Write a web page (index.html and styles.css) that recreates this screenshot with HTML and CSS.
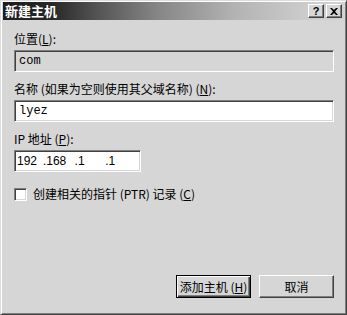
FILE: index.html
```html
<!DOCTYPE html>
<html lang="zh-CN">
<head>
  <meta charset="UTF-8" />
  <title>新建主机</title>
  <link rel="stylesheet" href="styles.css">
</head>
<body>
  <div class="window">
    <div class="titlebar">
      <span class="title">新建主机</span>
      <div class="title-buttons">
        <span class="tbtn">?</span>
        <span class="tbtn close">
          <svg width="8" height="7" viewBox="0 0 8 7"><path d="M0 0h2l2 2 2-2h2L5 3.5 8 7H6L4 5 2 7H0l3-3.5z" fill="#000"/></svg>
        </span>
      </div>
    </div>

    <div class="content">
      <div class="field-group">
        <label class="label">位置(<u>L</u>):</label>
        <div class="field readonly">com</div>
      </div>

      <div class="field-group">
        <label class="label">名称 (如果为空则使用其父域名称) (<u>N</u>):</label>
        <div class="field">lyez</div>
      </div>

      <div class="field-group">
        <label class="label">IP 地址 (<u>P</u>):</label>
        <div class="field ip">
          <span class="octet first">192</span><span class="octet second">.168</span><span class="octet">.1</span><span class="octet">.1</span>
        </div>
      </div>

      <div class="check-row">
        <span class="checkbox"></span>
        <span class="label">创建相关的指针 (PTR) 记录 (<u>C</u>)</span>
      </div>

      <div class="buttons">
        <button class="btn default">添加主机 (<u>H</u>)</button>
        <button class="btn">取消</button>
      </div>
    </div>
  </div>
</body>
</html>
```

FILE: styles.css
```css
body {
  margin: 0;
  padding: 0;
  background-color: #d6d6d6;
  font-family: "Noto Sans CJK SC", "DejaVu Sans", sans-serif;
  font-size: 12px;
  color: #000;
}
.window {
  width: 347px;
  height: 315px;
  box-sizing: border-box;
  background-color: #d6d6d6;
  border: 1px solid;
  border-color: #dcdcdc #404040 #404040 #dcdcdc;
  box-shadow: inset 1px 1px 0 #fff, inset -1px -1px 0 #808080;
  padding: 1px 2px 2px 2px;
  display: flex;
  flex-direction: column;
}
.titlebar {
  height: 18px;
  display: flex;
  align-items: center;
  justify-content: space-between;
  background: linear-gradient(to right, #1e1e1e 0%, #262626 14%, #555555 28%, #858585 45%, #b3b3b3 68%, #cbcbcb 88%, #d2d2d2 100%);
  padding: 0 2px 0 2px;
}
.title {
  color: #fff;
  font-weight: bold;
  font-size: 13px;
  line-height: 18px;
}
.title-buttons {
  display: flex;
  gap: 2px;
}
.tbtn {
  width: 16px;
  height: 14px;
  box-sizing: border-box;
  background-color: #d6d6d6;
  border: 1px solid;
  border-color: #fff #404040 #404040 #fff;
  box-shadow: inset -1px -1px 0 #808080;
  font-family: "Liberation Sans", sans-serif;
  font-weight: bold;
  font-size: 11px;
  line-height: 12px;
  text-align: center;
  display: flex;
  align-items: center;
  justify-content: center;
}
.content {
  flex: 1;
  display: flex;
  flex-direction: column;
  padding: 11px 10px 14px 11px;
}
.field-group {
  display: flex;
  flex-direction: column;
  margin-bottom: 9px;
}
.label {
  line-height: 16px;
  height: 16px;
  margin-bottom: 3px;
  white-space: nowrap;
}
.label u {
  text-underline-offset: 1px;
}
.field {
  height: 22px;
  box-sizing: border-box;
  background-color: #fff;
  border: 1px solid;
  border-color: #808080 #fff #fff #808080;
  box-shadow: inset 1px 1px 0 #404040, inset -1px -1px 0 #d6d6d6;
  font-family: "Liberation Mono", monospace;
  font-size: 12px;
  line-height: 20px;
  padding: 0 4px;
}
.field.readonly {
  background-color: #d6d6d6;
}
.field.ip {
  width: 127px;
  display: flex;
  font-family: "Liberation Sans", sans-serif;
  font-size: 12px;
  padding-left: 2px;
}
.octet {
  width: 32px;
}
.octet.first {
  width: 27px;
}
.octet.second {
  width: 33px;
}
.check-row {
  display: flex;
  align-items: center;
  gap: 6px;
  margin-top: 5px;
}
.check-row .label {
  margin-bottom: 0;
}
.checkbox {
  width: 13px;
  height: 13px;
  box-sizing: border-box;
  background-color: #fff;
  border: 1px solid;
  border-color: #808080 #fff #fff #808080;
  box-shadow: inset 1px 1px 0 #404040, inset -1px -1px 0 #d6d6d6;
}
.buttons {
  margin-top: auto;
  display: flex;
  justify-content: flex-end;
  gap: 8px;
}
.btn {
  width: 75px;
  height: 23px;
  box-sizing: border-box;
  background-color: #d6d6d6;
  font-family: "Noto Sans CJK SC", sans-serif;
  font-size: 12px;
  color: #000;
  border: 1px solid;
  border-color: #fff #404040 #404040 #fff;
  box-shadow: inset -1px -1px 0 #808080;
  padding: 0;
}
.btn.default {
  border: 1px solid #000;
  box-shadow: inset 1px 1px 0 #fff, inset -1px -1px 0 #404040, inset -2px -2px 0 #808080;
}
```
